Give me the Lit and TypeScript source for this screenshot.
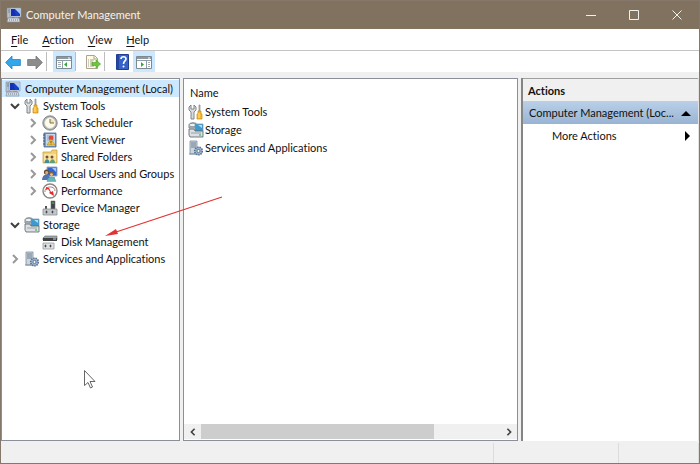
import { LitElement, html, svg, css, nothing, TemplateResult } from "lit";
import { customElement, property } from "lit/decorators.js";

const art: Record<string, TemplateResult> = {
  computer: svg`<path d="M1 1h5v10H1z" fill="#b9c3cf" stroke="#7d8894" stroke-width=".6"/><path d="M2 3h3M2 5h3" stroke="#718095"/><path d="M4 1h11v9H4z" fill="#cfd9e4" stroke="#8495a8" stroke-width=".7"/><path d="M5 2h9v7H5z" fill="#1740c4"/><path d="M9 2h5v5z" fill="#a4c9fa"/><path d="M5 2h3l2 7H5z" fill="#1430b4"/><path d="M8 10h4v2H8z" fill="#909eae"/><path d="M2 11h11l1 4H1z" fill="#d5dbe1" stroke="#8290a0" stroke-width=".7"/><path d="M3 13h9" stroke="#6d7a88" stroke-dasharray="1 1"/>`,
  tools: svg`<path d="M3 1 1 3v3l2 2v7h3V8l2-2V3L6 1v4H3z" fill="#d9dddf" stroke="#727a80" stroke-width=".9"/><path d="M11 1h1v6h-1z" fill="#bfc6ca" stroke="#7c868c" stroke-width=".7"/><path d="M10 7h3v3h1v5h-5v-5h1z" fill="#f5b82c" stroke="#c98d16" stroke-width=".7"/><path d="M11 9v5" stroke="#ffe391"/>`,
  clock: svg`<circle cx="8" cy="8" r="7.2" fill="#a6a9ac" stroke="#77797c" stroke-width=".8"/><circle cx="8" cy="8" r="5.4" fill="#fffbea" stroke="#d9d6c9" stroke-width=".7"/><path d="M8 8h4A4 4 0 0 0 8 4z" fill="#f6dfa5"/><path d="M8 4v4h4" fill="none" stroke="#746c5c"/>`,
  event: svg`<path d="M2 1h12v14H2z" fill="#779bcb" stroke="#47678f" stroke-width=".8"/><path d="M4 2h9v12H4z" fill="#c5d8ed"/><path d="M5 4h7M5 6h7M5 8h7" stroke="#7c96b5" stroke-width=".7"/><path d="M1 3h2M1 6h2M1 9h2M1 12h2" stroke="#4e5963"/><circle cx="9" cy="6" r="2.4" fill="#e34736"/><path d="m9 7 4 6H5z" fill="#f4c53c" stroke="#b48518" stroke-width=".6"/><path d="M9 9v2m0 .6v.8" stroke="#4a3a12" stroke-width=".8"/>`,
  folder: svg`<path d="M1 3h8l1-2h5v13H1z" fill="#f2cf70" stroke="#c49b3a" stroke-width=".7"/><path d="M2 5h12v8H2z" fill="#fae3a0"/><circle cx="5" cy="8" r="1.5" fill="#6e5337"/><circle cx="10" cy="8" r="1.5" fill="#6e5337"/><path d="M2.500 14c0-5 5-5 5 0z" fill="#478b94"/><path d="M8 14c0-5 5-5 5 0z" fill="#5d9e75"/>`,
  users: svg`<path d="M5 1h10v9H5z" fill="#2f65cf" stroke="#9aa9bb"/><path d="M10 2h4v4z" fill="#9bc8ff"/><path d="M10 11h3v2h-3z" fill="#a1a8b0"/><circle cx="4.5" cy="6" r="2.6" fill="#694a2e"/><circle cx="4.7" cy="6.6" r="1.6" fill="#dba77b"/><path d="M0 14c0-7 8-7 9 0z" fill="#5373ad"/><circle cx="9.5" cy="8" r="2.2" fill="#8b633a"/><circle cx="9.5" cy="8.6" r="1.4" fill="#eec096"/><path d="M5 15.5c0-6 8-6 9 0z" fill="#65b5bd" stroke="#4a939b" stroke-width=".4"/>`,
  performance: svg`<circle cx="8" cy="8" r="7" fill="#fff" stroke="#8d8585" stroke-width="1.4"/><path d="M3 9c-1-6 10-7 10-1" fill="none" stroke="#a17e7e"/><path d="m4 4 3 1 2 4 2-1 1 5-5-3 1-1-2-3-2 1z" fill="#e42c2c"/>`,
  device: svg`<path d="M9 1h4v9H9z" fill="#3f4347" stroke="#73777a" stroke-width=".6"/><path d="M10 3h2" stroke="#55d366"/><path d="M3 6h2v3H3z" fill="#555"/><path d="M1 9h14v6H1z" fill="#c4c7c9" stroke="#8c9094" stroke-width=".8"/><path d="M4 11h1v2H4zM10 11h1v2h-1z" fill="#45494c" stroke="#45494c" stroke-width=".6"/>`,
  storage: svg`<path d="M1 3c0-3 8-3 8 0v3H1z" fill="#c2cdd2" stroke="#66747a" stroke-width=".8"/><ellipse cx="5" cy="3" rx="4" ry="1.7" fill="#edf2f3" stroke="#718087" stroke-width=".7"/><path d="M7 2h8v7H7z" fill="#3b9bd0" stroke="#7a9aa9" stroke-width=".7"/><path d="m10 3 4 0v3z" fill="#a7e0fa"/><path d="M1 7h5l1 2h8v6H2L1 13z" fill="#dae0e3" stroke="#566066" stroke-width=".8"/><path d="M3 11h10" stroke="#98a2a7"/><path d="M11 13h2" stroke="#27ae4a"/>`,
  disk: svg`<path d="m3 2 12 0v4H1V4z" fill="#9da2a5" stroke="#74787b" stroke-width=".7"/><path d="M1 4h14v3H1z" fill="#3e4245"/><path d="M11 5h3" stroke="#c7d0d4"/><path d="M1 9h11v6H1z" fill="#dfe1e2" stroke="#95999c" stroke-width=".8"/><path d="M3 11h1v2H3zM8 11h1v2H8z" fill="#44484a" stroke="#44484a" stroke-width=".6"/>`,
  services: svg`<path d="M2 1h7v13H2z" fill="#cad5df" stroke="#788b9b" stroke-width=".8"/><path d="M3 3h5M3 5h5M3 7h5" stroke="#6a7c8c"/><path d="M1 14h7" stroke="#8497a6"/><circle cx="10.5" cy="11" r="3.8" fill="#a5bbd0" stroke="#55728f" stroke-dasharray="1.5 .8" stroke-width="1.6"/><circle cx="10.5" cy="11" r="1.6" fill="#eef4f9" stroke="#4a6280" stroke-width=".8"/>`,
  back: svg`<path d="M.6 8.500 7 2v3.500h8.400v6H7V15z" fill="#32a8ea" stroke="#2287c9" stroke-width=".8"/>`,
  forward: svg`<path d="M15.400 8.500 9 2v3.500H.6v6H9V15z" fill="#8c8c8c" stroke="#777" stroke-width=".8"/>`,
  paneLeft: svg`<path d="M.5 2.500h15v12H.5z" fill="#fff" stroke="#7e8992"/><path d="M1 3h14v2H1z" fill="#8c98a2"/><path d="M12 4h2" stroke="#fff"/><path d="M1 6.500h14M6.500 7v7" stroke="#929ca4"/><path d="M2 8.500h3M2 10.500h3M2 12.500h3" stroke="#a2abb2"/><path d="M11 8v5L8 10.500z" fill="#31a83f"/>`,
  paneRight: svg`<path d="M.5 2.500h15v12H.5z" fill="#fff" stroke="#7e8992"/><path d="M1 3h14v2H1z" fill="#8c98a2"/><path d="M12 4h2" stroke="#fff"/><path d="M1 6.500h14M10.500 7v7" stroke="#929ca4"/><path d="M12 8.500h2M12 10.500h2M12 12.500h2" stroke="#a2abb2"/><path d="M5 8v5l3-2.500z" fill="#31a83f"/>`,
  exportList: svg`<path d="M1.500 1.500h8l3 3v10h-11z" fill="#fffbe4" stroke="#aaa58c"/><path d="M9 2v3h3" fill="none" stroke="#aaa58c"/><path d="M3 6h1m1 0h4M3 8h1m1 0h3M3 10h1m1 0h3M3 12h1m1 0h4" stroke="#888b84" stroke-width=".8"/><path d="M7 8.500h4V6l4.600 4-4.600 4v-2.500H7z" fill="#69c83c" stroke="#47a322" stroke-width=".6"/>`,
  help: svg`<path d="M2.500.5h12v15h-12z" fill="#3563ca" stroke="#233f93"/><path d="M3 1h2v14H3z" fill="#2445a0"/><path d="M7 5c0-3 5-3 5 0 0 2-2.500 2-2.500 5" fill="none" stroke="#fff" stroke-width="1.600"/><circle cx="9.500" cy="12.500" r="1" fill="#fff"/>`,
};

@customElement("mmc-icon")
class MmcIcon extends LitElement {
  static styles = css`
    :host { display: block; flex: none; width: 16px; height: 16px; }
    .art { display: block; width: 100%; height: 100%; }
  `;
  @property() name = "";
  render() {
    return html`<svg class="art" viewBox="0 0 16 16" aria-hidden="true">${art[this.name]}</svg>`;
  }
}

interface Node { label: string; icon: string; level: number; state?: "open" | "closed"; selected?: boolean; }

const nodes: Node[] = [
  { label: "Computer Management (Local)", icon: "computer", level: 0, selected: true },
  { label: "System Tools", icon: "tools", level: 1, state: "open" },
  { label: "Task Scheduler", icon: "clock", level: 2, state: "closed" },
  { label: "Event Viewer", icon: "event", level: 2, state: "closed" },
  { label: "Shared Folders", icon: "folder", level: 2, state: "closed" },
  { label: "Local Users and Groups", icon: "users", level: 2, state: "closed" },
  { label: "Performance", icon: "performance", level: 2, state: "closed" },
  { label: "Device Manager", icon: "device", level: 2 },
  { label: "Storage", icon: "storage", level: 1, state: "open" },
  { label: "Disk Management", icon: "disk", level: 2 },
  { label: "Services and Applications", icon: "services", level: 1, state: "closed" },
];

const chevron = (d: string) => html`<svg class="chevron" viewBox="0 0 10 10" aria-hidden="true"><path d=${d} /></svg>`;

@customElement("app-root")
class AppRoot extends LitElement {
  static styles = css`
    :host { display: block; font: 11px/16px Lato, "Noto Sans", sans-serif; font-variant-ligatures: none; color: #111; }
    * { box-sizing: border-box; }
    button { font: inherit; font-variant-ligatures: none; color: inherit; background: none; border: 0; padding: 0; margin: 0; text-align: left; }
    .window { position: relative; display: flex; flex-direction: column; min-height: 100vh; border: 1px solid #85786a; background: #f0f0f0; }
    .titlebar { display: flex; align-items: center; height: 28px; padding: 0 1px 0 5px; background: #80725f; color: #f4f2ef; }
    .title { flex: 1; margin: 0; padding-left: 4px; font-size: 11px; font-weight: 400; }
    .caption { display: grid; place-items: center; width: 43px; height: 28px; }
    .caption svg { width: 10px; height: 10px; fill: none; stroke: #f2f0ec; }
    .menubar { display: flex; align-items: center; height: 22px; padding-left: 3px; background: #fff; border-bottom: 1px solid #c4c4c4; }
    .menu { padding: 0 7px; }
    .menu u { text-underline-offset: 2px; }
    .toolbar { display: flex; align-items: center; height: 21px; padding-left: 1px; background: #fff; }
    .tool { display: grid; place-items: center; width: 22px; height: 21px; }
    .tool.on { background: #cce8ff; }
    .rule { width: 1px; height: 19px; margin-right: 6px; background: #bdbdbd; }
    .body { flex: 1; display: grid; grid-template-columns: 179px minmax(0, 1fr) 178px; gap: 3px; padding-top: 6px; }
    .pane { background: #fff; border: 1px solid #8b8f99; min-width: 0; display: flex; flex-direction: column; }
    .tree { margin: 0; padding: 1px 0; list-style: none; }
    .node { display: flex; align-items: center; width: 100%; height: 17px; gap: 3px; white-space: nowrap; }
    .node.level0 { padding-left: 3px; gap: 4px; }
    .node.level1 { padding-left: 7px; }
    .node.level2 { padding-left: 25px; }
    .node.selected { background: #cce8ff; }
    .twist { display: grid; place-items: center; width: 12px; flex: none; }
    .chevron { width: 10px; height: 10px; fill: none; stroke: #999; stroke-width: 2; }
    .open .chevron, .scroll .chevron { stroke: #404040; }
    .list { flex: 1; }
    .names { border-collapse: collapse; margin: 4px; }
    .names th { font-weight: 400; text-align: left; height: 20px; padding: 0 2px; }
    .names td { height: 18px; padding: 0; }
    .item { display: flex; align-items: center; gap: 1px; white-space: nowrap; }
    .scroll { display: flex; height: 15px; margin-bottom: 1px; background: #f0f0f0; }
    .step { display: grid; place-items: center; width: 17px; flex: none; }
    .scroll .chevron { width: 8px; height: 8px; }
    .track { flex: 1; display: flex; }
    .thumb { width: 78%; background: #cdcdcd; }
    .actions { border: 0; border-left: 2px solid #858585; border-right: 1px solid #e3e3e3; }
    .heading { margin: 0; height: 23px; padding: 4px 5px 0; font-size: 11px; line-height: 16px; font-weight: 700; background: #f0f0f0; border-top: 1px solid #a0a0a0; }
    .group { display: flex; align-items: center; justify-content: space-between; height: 23px; padding: 0 7px 0 6px; background: linear-gradient(#bad0e8, #98b4d3); }
    .more { display: flex; align-items: center; justify-content: space-between; height: 23px; padding: 0 7px 0 29px; }
    .mark { width: 10px; height: 10px; flex: none; }
    .clip { white-space: nowrap; }
    .status { display: flex; height: 22px; padding-top: 2px; }
    .cell { border-right: 1px solid #dcdcdc; }
    .cell.main { flex: 1; }
    .cell.second { width: 125px; }
    .cell.third { width: 80px; }
    .pointer { position: absolute; left: 104px; top: 194px; width: 120px; height: 44px; pointer-events: none; }
    .cursor { position: absolute; left: 82px; top: 368px; width: 14px; height: 20px; pointer-events: none; }
  `;

  renderNode(n: Node) {
    return html`<li>
      <button class="node level${n.level} ${n.selected ? "selected" : ""} ${n.state ?? ""}">
        ${n.level ? html`<span class="twist">${n.state === "open" ? chevron("M1 3l4 4 4-4") : n.state ? chevron("M3 1l4 4-4 4") : nothing}</span>` : nothing}
        <mmc-icon name=${n.icon}></mmc-icon><span>${n.label}</span>
      </button>
    </li>`;
  }

  tool(icon: string, label: string, on = false) {
    return html`<button class="tool ${on ? "on" : ""}" aria-label=${label}><mmc-icon name=${icon}></mmc-icon></button>`;
  }

  render() {
    return html`<div class="window">
      <header class="titlebar">
        <mmc-icon name="computer"></mmc-icon>
        <h1 class="title">Computer Management</h1>
        <button class="caption" aria-label="Minimize"><svg viewBox="0 0 10 10"><path d="M0 5.500h10" /></svg></button>
        <button class="caption" aria-label="Maximize"><svg viewBox="0 0 10 10"><path d="M.5.5h9v9h-9z" /></svg></button>
        <button class="caption" aria-label="Close"><svg viewBox="0 0 10 10"><path d="m.5.5 9 9m0-9-9 9" /></svg></button>
      </header>
      <nav class="menubar">
        ${["File", "Action", "View", "Help"].map((m) => html`<button class="menu"><u>${m[0]}</u>${m.slice(1)}</button>`)}
      </nav>
      <div class="toolbar">
        ${this.tool("back", "Back")}${this.tool("forward", "Forward")}<span class="rule"></span>
        ${this.tool("paneLeft", "Show or hide console tree", true)}<span class="rule"></span>
        ${this.tool("exportList", "Export list")}<span class="rule"></span>
        ${this.tool("help", "Help")}${this.tool("paneRight", "Show or hide action pane", true)}
      </div>
      <main class="body">
        <nav class="pane"><ul class="tree">${nodes.map((n) => this.renderNode(n))}</ul></nav>
        <section class="pane">
          <div class="list">
            <table class="names">
              <thead><tr><th>Name</th></tr></thead>
              <tbody>${nodes.filter((n) => n.level === 1).map((n) => html`<tr><td><div class="item"><mmc-icon name=${n.icon}></mmc-icon>${n.label}</div></td></tr>`)}</tbody>
            </table>
          </div>
          <div class="scroll">
            <button class="step" aria-label="Scroll left">${chevron("M7 1L3 5l4 4")}</button>
            <span class="track"><span class="thumb"></span></span>
            <button class="step" aria-label="Scroll right">${chevron("M3 1l4 4-4 4")}</button>
          </div>
        </section>
        <aside class="pane actions">
          <h2 class="heading">Actions</h2>
          <button class="group"><span class="clip">Computer Management (Loc...</span><svg class="mark" viewBox="0 0 10 10"><path d="M0 8h10L5 3z" /></svg></button>
          <button class="more">More Actions<svg class="mark" viewBox="0 0 10 10"><path d="M4 0v10l5-5z" /></svg></button>
        </aside>
      </main>
      <footer class="status"><span class="cell main"></span><span class="cell second"></span><span class="cell third"></span></footer>
      <svg class="pointer" viewBox="0 0 120 44" aria-hidden="true"><path d="M117 2 8 38" stroke="#e03434" stroke-width="1.3" /><path d="m0 41 11-7 2 5z" fill="#e03434" /></svg>
      <svg class="cursor" viewBox="0 0 14 20" aria-hidden="true"><path d="M1.500 1.500v15l3.500-3 2.500 5.500 2-1-2.500-5.500h5z" fill="#fff" stroke="#555" stroke-width=".9" /></svg>
    </div>`;
  }
}
